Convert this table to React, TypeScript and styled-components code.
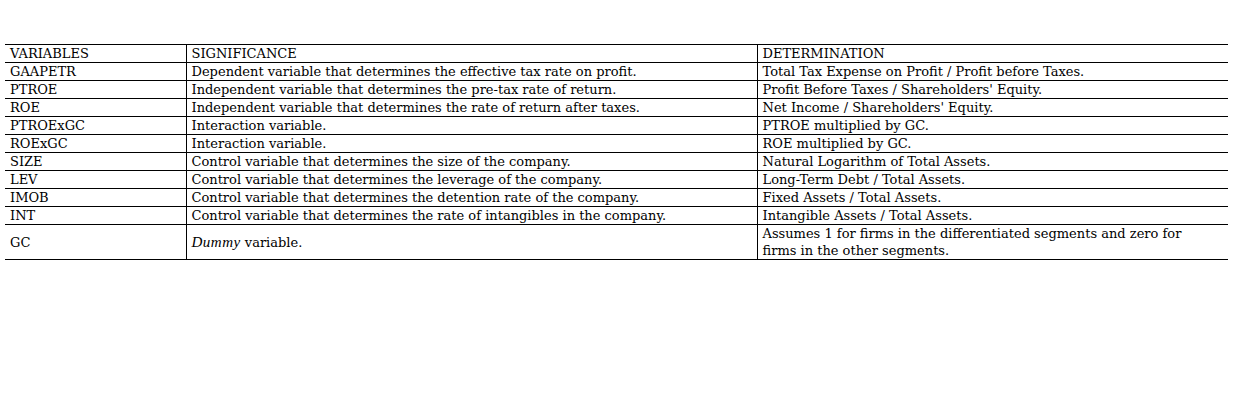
import React from 'react';
import styled, { createGlobalStyle } from 'styled-components';

const GlobalStyle = createGlobalStyle`
  html, body {
    margin: 0;
    padding: 0;
    background: #ffffff;
  }
`;

const Page = styled.div`
  padding: 44px 5px 0 5px;
  width: 1223px;
`;

const Table = styled.table`
  width: 1223px;
  border-collapse: collapse;
  table-layout: fixed;
  font-family: "DejaVu Serif", "Liberation Serif", serif;
  font-size: 13px;
  color: #000;
  border-top: 1px solid #000;
`;

const Cell = styled.td<{ $first?: boolean; $tall?: boolean }>`
  padding: 0 5px;
  height: ${(p) => (p.$tall ? '34px' : '17px')};
  line-height: 17px;
  vertical-align: middle;
  border-bottom: 1px solid #000;
  border-left: ${(p) => (p.$first ? 'none' : '1px solid #000')};
  white-space: nowrap;
  overflow: hidden;
  &.wrap {
    white-space: normal;
    padding-right: 24px;
  }
`;

const Em = styled.i`
  font-family: "Liberation Serif", serif;
  font-size: 15px;
  letter-spacing: 0.5px;
`;

type Row = { v: string; s: React.ReactNode; d: string; tall?: boolean };

const rows: Row[] = [
  { v: 'VARIABLES', s: 'SIGNIFICANCE', d: 'DETERMINATION' },
  { v: 'GAAPETR', s: 'Dependent variable that determines the effective tax rate on profit.', d: 'Total Tax Expense on Profit / Profit before Taxes.' },
  { v: 'PTROE', s: 'Independent variable that determines the pre-tax rate of return.', d: "Profit Before Taxes / Shareholders' Equity." },
  { v: 'ROE', s: 'Independent variable that determines the rate of return after taxes.', d: "Net Income / Shareholders' Equity." },
  { v: 'PTROExGC', s: 'Interaction variable.', d: 'PTROE multiplied by GC.' },
  { v: 'ROExGC', s: 'Interaction variable.', d: 'ROE multiplied by GC.' },
  { v: 'SIZE', s: 'Control variable that determines the size of the company.', d: 'Natural Logarithm of Total Assets.' },
  { v: 'LEV', s: 'Control variable that determines the leverage of the company.', d: 'Long-Term Debt / Total Assets.' },
  { v: 'IMOB', s: 'Control variable that determines the detention rate of the company.', d: 'Fixed Assets / Total Assets.' },
  { v: 'INT', s: 'Control variable that determines the rate of intangibles in the company.', d: 'Intangible Assets / Total Assets.' },
  {
    v: 'GC',
    s: (
      <>
        <Em>Dummy</Em> variable.
      </>
    ),
    d: 'Assumes 1 for firms in the differentiated segments and zero for firms in the other segments.',
    tall: true,
  },
];

export default function App() {
  return (
    <Page>
      <GlobalStyle />
      <Table>
        <colgroup>
          <col style={{ width: 181 }} />
          <col style={{ width: 571 }} />
          <col style={{ width: 471 }} />
        </colgroup>
        <tbody>
          {rows.map((r) => (
            <tr key={r.v}>
              <Cell $first $tall={r.tall}>{r.v}</Cell>
              <Cell $tall={r.tall}>{r.s}</Cell>
              <Cell $tall={r.tall} className={r.tall ? 'wrap' : undefined}>{r.d}</Cell>
            </tr>
          ))}
        </tbody>
      </Table>
    </Page>
  );
}
